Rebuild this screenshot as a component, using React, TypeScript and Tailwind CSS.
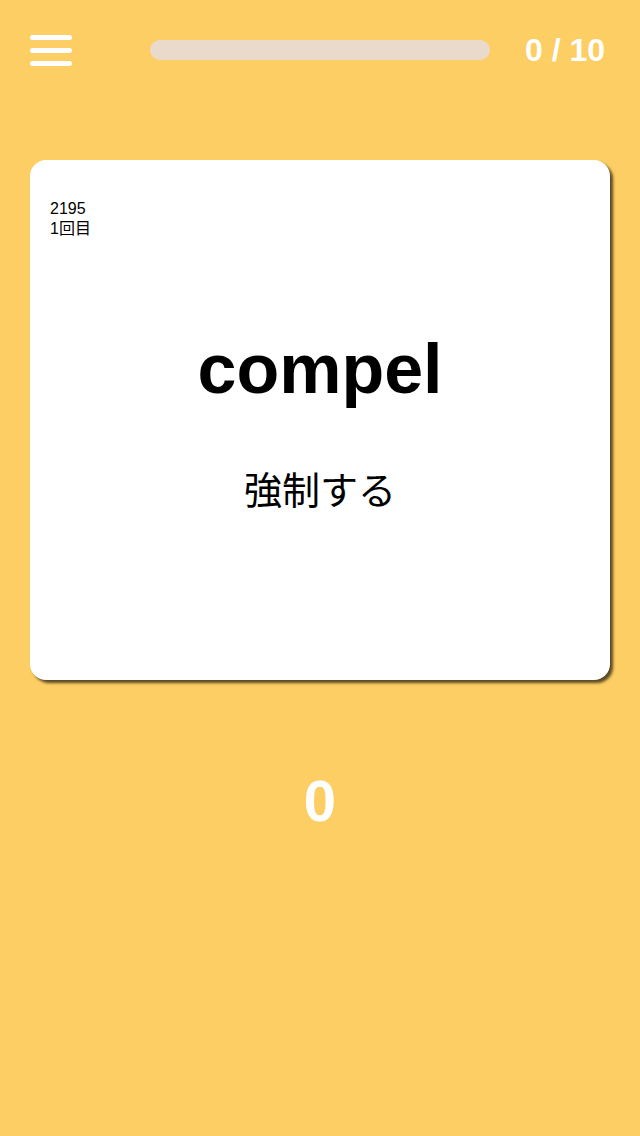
export default function App() {
  return (
    <div
      className="w-[640px] h-[1136px] bg-[#fdce63] flex flex-col"
      style={{ fontFamily: '"Liberation Sans", "Noto Sans CJK JP", sans-serif' }}
    >
      <header className="h-[100px] flex items-center pl-[30px] pr-[35px]">
        <button className="flex flex-col gap-[8px] w-[42px]" aria-label="menu">
          <span className="h-[5px] w-full rounded-full bg-white" />
          <span className="h-[5px] w-full rounded-full bg-white" />
          <span className="h-[5px] w-full rounded-full bg-white" />
        </button>
        <div className="ml-[78px] w-[340px] h-[20px] rounded-[10px] bg-[#e9dacb]" />
        <div className="ml-auto text-white font-bold text-[32px] leading-none">0 / 10</div>
      </header>

      <main className="flex flex-col items-center">
        <div className="mt-[60px] w-[580px] h-[520px] bg-white rounded-[16px] shadow-[3px_3px_3px_rgba(0,0,0,0.65)] flex flex-col px-[20px] pt-[39px]">
          <div className="text-[16px] leading-[20px] text-black">
            <div>2195</div>
            <div>1回目</div>
          </div>
          <div className="flex flex-col items-center mt-[90px]">
            <div className="text-[70px] leading-[80px] font-bold text-black">compel</div>
            <div className="mt-[58px] text-[38px] leading-[48px] text-black">強制する</div>
          </div>
        </div>

        <div className="mt-[92px] text-white font-bold text-[58px] leading-none">0</div>
      </main>
    </div>
  );
}
